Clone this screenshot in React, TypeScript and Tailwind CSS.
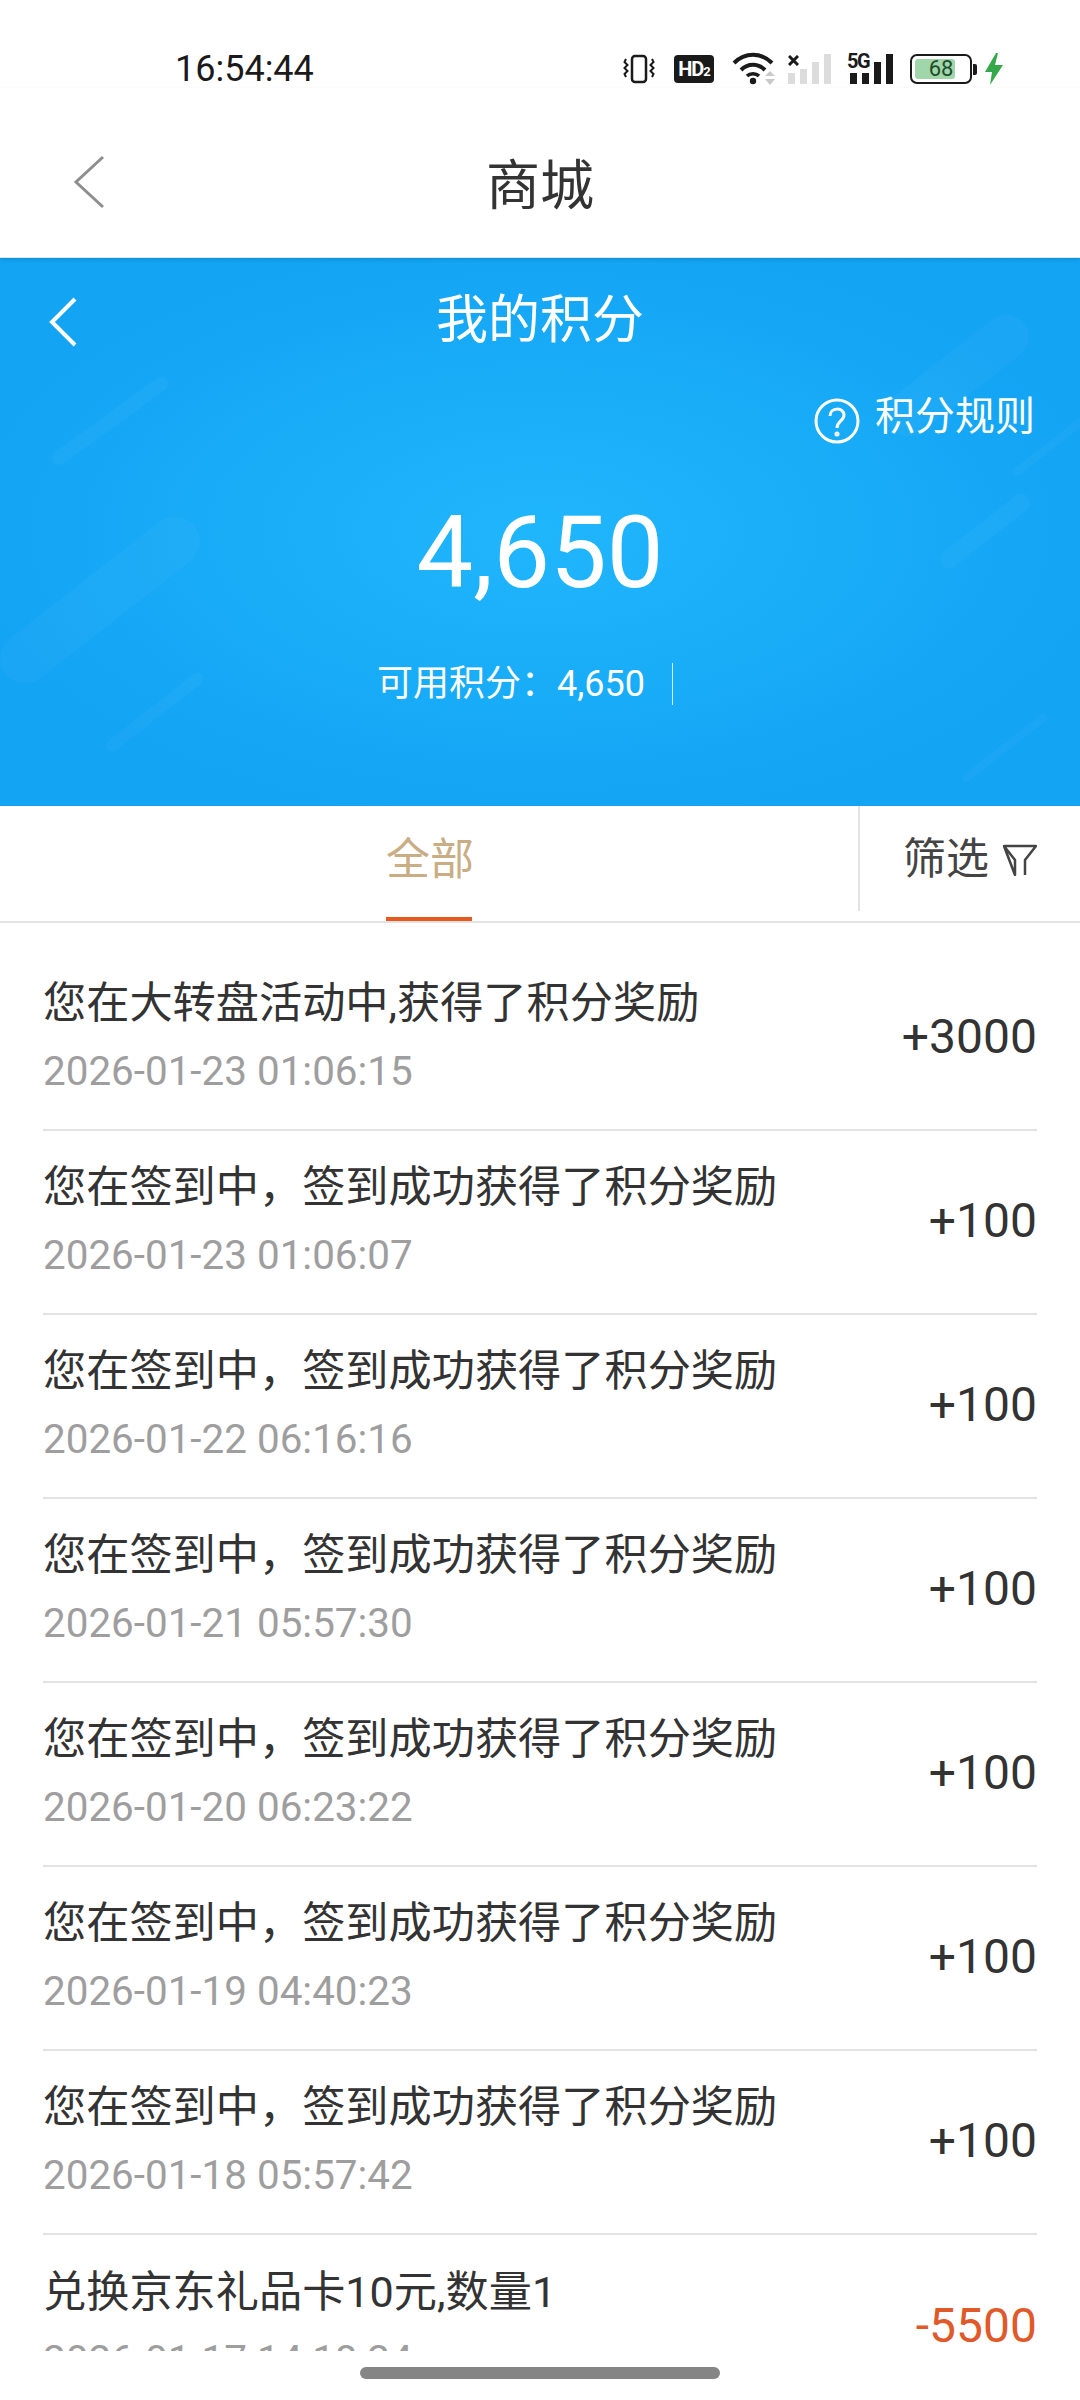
const font = { fontFamily: '"Roboto", "Noto Sans CJK SC", sans-serif' };

const rows = [
  { title: "您在大转盘活动中,获得了积分奖励", time: "2026-01-23 01:06:15", value: "+3000" },
  { title: "您在签到中，签到成功获得了积分奖励", time: "2026-01-23 01:06:07", value: "+100" },
  { title: "您在签到中，签到成功获得了积分奖励", time: "2026-01-22 06:16:16", value: "+100" },
  { title: "您在签到中，签到成功获得了积分奖励", time: "2026-01-21 05:57:30", value: "+100" },
  { title: "您在签到中，签到成功获得了积分奖励", time: "2026-01-20 06:23:22", value: "+100" },
  { title: "您在签到中，签到成功获得了积分奖励", time: "2026-01-19 04:40:23", value: "+100" },
  { title: "您在签到中，签到成功获得了积分奖励", time: "2026-01-18 05:57:42", value: "+100" },
  { title: "兑换京东礼品卡10元,数量1", time: "2026-01-17 14:18:24", value: "-5500" },
];

function StatusIcons() {
  return (
    <div className="flex items-center">
      {/* vibrate */}
      <svg width="32" height="30" viewBox="0 0 32 30" fill="none" stroke="#1a1a1a" className="ml-[623px]">
        <rect x="9" y="2" width="14" height="26" rx="3" strokeWidth="2.5" />
        <path d="M3 5l-1.5 3 3 3-3 3 3 3-3 3 1.5 3M29 5l1.5 3-3 3 3 3-3 3 3 3-1.5 3" strokeWidth="2" />
      </svg>
      <div className="ml-[19px] flex h-[28px] w-[40px] items-center justify-center rounded-[4px] bg-[#1a1a1a] text-[20px] font-bold leading-none tracking-[-1px] text-white">
        HD<span className="mt-[5px] text-[13px]">2</span>
      </div>
      {/* wifi */}
      <svg width="46" height="34" viewBox="0 0 46 34" fill="none" className="ml-[18px]">
        <path d="M2 11C13 0 29 0 40 11" stroke="#1a1a1a" strokeWidth="4" />
        <path d="M9 18C16 11 26 11 33 18" stroke="#1a1a1a" strokeWidth="4" />
        <path d="M15 24C18 21 24 21 27 24" stroke="#1a1a1a" strokeWidth="3.5" />
        <circle cx="21" cy="29" r="3.2" fill="#1a1a1a" />
        <path d="M33 24l5-5 5 5zM33 27l5 6 5-6z" fill="#c9c9c9" />
      </svg>
      {/* sim 1 */}
      <div className="relative ml-[10px] flex h-[30px] w-[43px] items-end gap-[5px]">
        <span className="h-[11px] w-[7px] bg-[#dcdcdc]" />
        <span className="h-[15px] w-[7px] bg-[#dcdcdc]" />
        <span className="h-[22px] w-[7px] bg-[#dcdcdc]" />
        <span className="h-[30px] w-[7px] bg-[#dcdcdc]" />
        <svg width="11" height="11" viewBox="0 0 11 11" stroke="#1a1a1a" strokeWidth="3" className="absolute left-0 top-[1px]">
          <path d="M1 1l9 9M10 1l-9 9" />
        </svg>
      </div>
      {/* sim 2 */}
      <div className="relative ml-[19px] flex h-[30px] w-[43px] items-end gap-[5px]">
        <span className="h-[11px] w-[7px] bg-[#1a1a1a]" />
        <span className="h-[11px] w-[7px] bg-[#1a1a1a]" />
        <span className="h-[22px] w-[7px] bg-[#1a1a1a]" />
        <span className="h-[30px] w-[7px] bg-[#1a1a1a]" />
        <span className="absolute -left-[3px] -top-[3px] text-[20px] font-bold leading-none tracking-[-1.5px] text-[#1a1a1a]">5G</span>
      </div>
      {/* battery */}
      <div className="ml-[17px] flex items-center">
        <div className="flex h-[30px] w-[62px] items-center rounded-[7px] border-[2px] border-[#1a1a1a] p-[3px]">
          <div className="flex h-full w-[40px] items-center justify-center rounded-[3px] bg-[#a1d6aa] text-[22px] leading-none text-[#1d4d2a]">
            <span className="ml-[12px]">68</span>
          </div>
        </div>
        <div className="ml-[1px] h-[11px] w-[4px] rounded-r-[2px] bg-[#1a1a1a]" />
      </div>
      <svg width="20" height="32" viewBox="0 0 20 32" className="ml-[7px]">
        <path d="M12 0L1 19h7l-2 13 13-20h-8l3-12z" fill="#35a949" />
      </svg>
    </div>
  );
}

function Decor() {
  return (
    <>
      <div className="absolute left-[40px] top-[156px] h-[14px] w-[140px] -rotate-[36deg] rounded-full bg-white/[0.03]" />
      <div className="absolute -left-[20px] top-[317px] h-[50px] w-[240px] -rotate-[38deg] rounded-full bg-white/[0.03]" />
      <div className="absolute left-[95px] top-[448px] h-[12px] w-[120px] -rotate-[38deg] rounded-full bg-white/[0.03]" />
      <div className="absolute right-[38px] top-[95px] h-[45px] w-[170px] -rotate-[38deg] rounded-full bg-white/[0.03]" />
      <div className="absolute right-[40px] top-[264px] h-[18px] w-[110px] -rotate-[38deg] rounded-full bg-white/[0.03]" />
      <div className="absolute right-[23px] top-[486px] h-[8px] w-[105px] -rotate-[38deg] rounded-full bg-white/[0.03]" />
      <div className="absolute -right-[15px] top-[184px] h-[8px] w-[90px] -rotate-[38deg] rounded-full bg-white/[0.03]" />
    </>
  );
}

function Row({ title, time, value }: { title: string; time: string; value: string }) {
  return (
    <div className="flex h-[184px] items-center justify-between border-b-[2px] border-[#e3e3e3] pb-[1px] last:border-b-0">
      <div className="pb-[2px]">
        <p className="text-[43.2px] leading-[56px] text-[#333333]">{title}</p>
        <p className="mt-[14px] text-[40.4px] leading-[52px] text-[#9e9e9e]">{time}</p>
      </div>
      <p className={`mt-[-2px] text-[48px] leading-none ${value.startsWith("-") ? "text-[#e0592a]" : "text-[#333333]"}`}>{value}</p>
    </div>
  );
}

export default function App() {
  return (
    <div className="relative flex h-[2400px] w-[1080px] flex-col overflow-hidden bg-white" style={font}>
      <div className="relative h-[88px] shrink-0">
        <span className="absolute left-[175px] top-[48px] text-[36px] leading-[42px] text-[#1a1a1a]">16:54:44</span>
        <div className="absolute left-0 top-[52px]">
          <StatusIcons />
        </div>
      </div>

      <header className="relative z-10 flex h-[170px] shrink-0 items-center justify-center border-b border-[#dfe6ea] bg-white shadow-[0_2px_4px_rgba(0,0,0,0.12)]">
        <svg width="34" height="56" viewBox="0 0 34 56" fill="none" stroke="#8e8e8e" strokeWidth="3" className="absolute left-[72px] top-[66px]">
          <path d="M31 3L4 28l27 25" />
        </svg>
        <h1 className="mt-[29px] text-[54px] leading-none text-[#333333]">商城</h1>
      </header>

      <section className="relative h-[548px] shrink-0 overflow-hidden bg-[radial-gradient(ellipse_at_center,#20b6fc_0%,#13a4f4_75%)] text-white">
        <Decor />
        <div className="relative flex h-[124px] items-center justify-center">
          <svg width="30" height="50" viewBox="0 0 30 50" fill="none" stroke="white" strokeWidth="4" className="absolute left-[48px] top-[39px]">
            <path d="M27 2L4 25l23 23" />
          </svg>
          <h2 className="mt-[2px] text-[52px] leading-none">我的积分</h2>
        </div>
        <div className="absolute right-[45px] top-[132px] flex items-center">
          <svg width="46" height="46" viewBox="0 0 46 46" fill="none" stroke="white" strokeWidth="3" className="mt-[8px]">
            <circle cx="23" cy="23" r="21" />
            <path d="M16 18c0-9 14-9 14-1 0 6-7 6-7 13" />
            <circle cx="23" cy="36" r="1" />
          </svg>
          <span className="ml-[15px] text-[40px] leading-none">积分规则</span>
        </div>
        <div className="relative mt-[120px] text-center text-[101px] leading-none">4,650</div>
        <div className="relative mr-[30px] mt-[60px] flex items-center justify-center">
          <span className="text-[36px] leading-none">可用积分：4,650</span>
          <span className="ml-[27px] h-[42px] w-[1px] bg-white/80" />
        </div>
      </section>

      <div className="flex h-[117px] shrink-0 border-b-[2px] border-[#e3e3e3]">
        <div className="relative flex flex-1 items-center justify-center">
          <span className="mt-[-7px] mr-[-2px] text-[44px] leading-none text-[#c8ad85]">全部</span>
          <span className="absolute bottom-0 left-[386px] h-[4px] w-[86px] bg-[#e8591e]" />
        </div>
        <div className="flex h-[105px] w-[222px] items-center justify-center gap-[14px] border-l-[2px] border-[#e3e3e3]">
          <span className="mt-[2px] text-[43px] leading-none text-[#444444]">筛选</span>
          <svg width="34" height="32" viewBox="0 0 34 32" fill="none" stroke="#444444" strokeWidth="2.5" strokeLinejoin="round" className="mt-[3px]">
            <path d="M1 2h32L22 16v15M12 31V16L1 2z" />
          </svg>
        </div>
      </div>

      <div className="h-[1428px] shrink-0 overflow-hidden px-[43px] pt-[24px]">
        {rows.map((row) => (
          <Row key={row.time} {...row} />
        ))}
      </div>

      <div className="absolute left-[360px] top-[2367px] h-[12px] w-[360px] rounded-full bg-[#858585]" />
    </div>
  );
}
